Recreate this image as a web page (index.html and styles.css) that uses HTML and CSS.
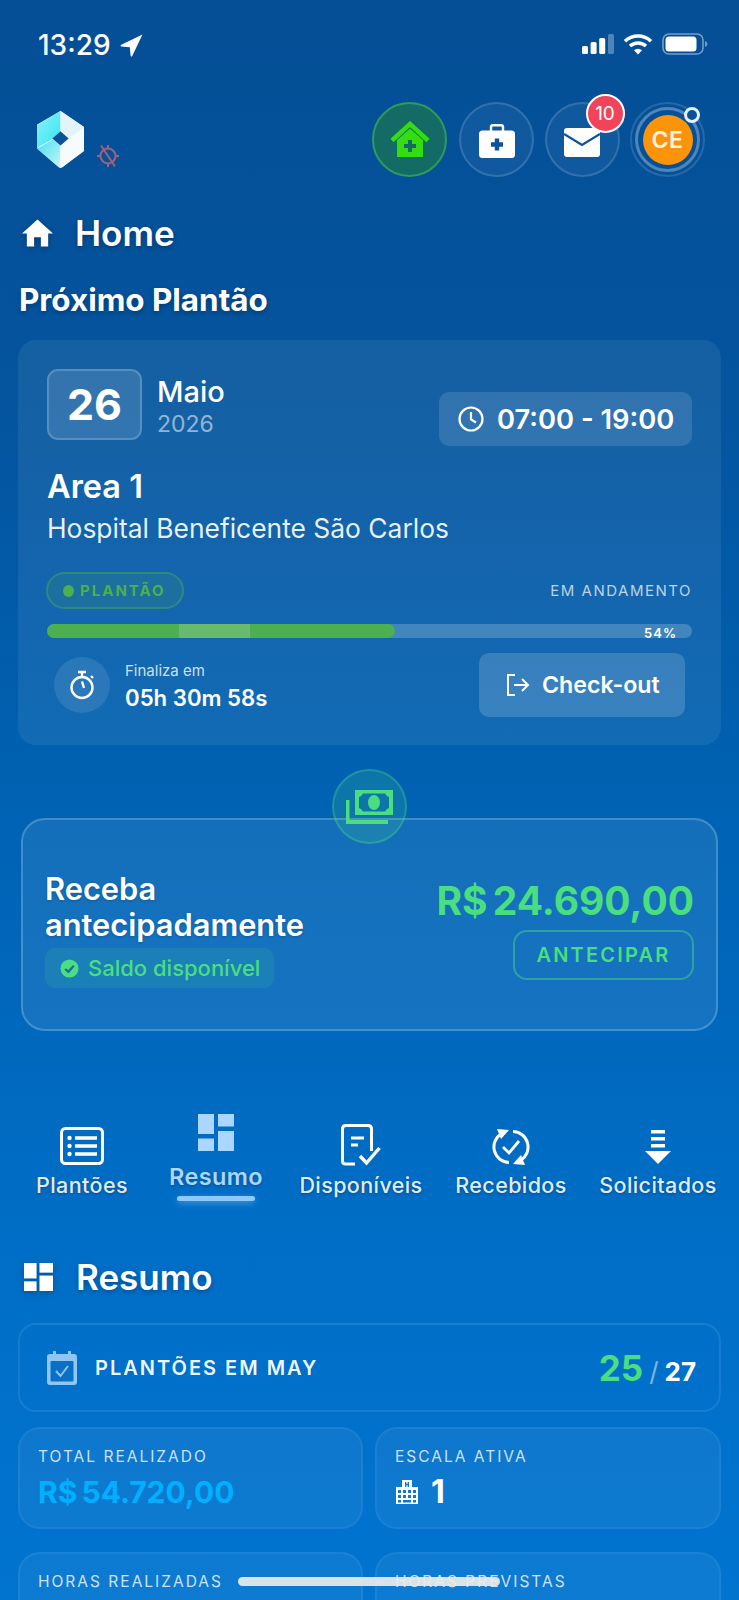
FILE: index.html
```html
<!DOCTYPE html>
<html lang="pt-BR">
<head>
  <meta charset="UTF-8">
  <meta name="viewport" content="width=device-width, initial-scale=1.0">
  <title>Home</title>
  <link rel="stylesheet" href="styles.css">
</head>
<body>
  <!-- Barra de status -->
  <div class="status-bar">
    <div class="status-time">
      <span>13:29</span>
      <svg class="status-arrow" viewBox="0 0 22 22"><path d="M21.5 .5 L.8 10.6 Q0 11.6 1.2 12 L9.4 12.7 L10.2 21 Q10.8 22 11.6 21.2 Z" fill="#fff"/></svg>
    </div>
    <div class="status-icons">
      <svg class="status-signal" viewBox="0 0 32 20">
        <rect x="0" y="12" width="6" height="8" rx="1.5" fill="#fff"/>
        <rect x="8.6" y="8" width="6" height="12" rx="1.5" fill="#fff"/>
        <rect x="17.2" y="4" width="6" height="16" rx="1.5" fill="#fff"/>
        <rect x="26" y="0" width="6" height="20" rx="1.5" fill="#fff" opacity=".3"/>
      </svg>
      <svg class="status-wifi" viewBox="0 0 30 22">
        <path d="M2 8.2 A19 19 0 0 1 28 8.2" fill="none" stroke="#fff" stroke-width="3.6"/>
        <path d="M7 13 A12 12 0 0 1 23 13" fill="none" stroke="#fff" stroke-width="3.6"/>
        <path d="M11 17.2 A6 6 0 0 1 19 17.2 L15 21.6 Z" fill="#fff"/>
      </svg>
      <svg class="status-battery" viewBox="0 0 46 22">
        <rect x="1" y="1" width="40" height="20" rx="6" fill="none" stroke="#fff" stroke-opacity=".45" stroke-width="1.6"/>
        <rect x="3.5" y="3.5" width="31" height="15" rx="3.5" fill="#fff"/>
        <path d="M43 8 Q45.5 9 45.5 11 Q45.5 13 43 14 Z" fill="#fff" fill-opacity=".45"/>
      </svg>
    </div>
  </div>

  <!-- Topo -->
  <div class="top-row">
    <div class="brand">
      <svg class="brand-logo" viewBox="0 0 46 56">
        <defs>
          <linearGradient id="logoCyan" x1="0" y1="0" x2="1" y2="1">
            <stop offset="0" stop-color="#8af2f6"/>
            <stop offset="1" stop-color="#35e4f4"/>
          </linearGradient>
          <linearGradient id="logoLow" x1="0" y1="0" x2="1" y2="1">
            <stop offset="0" stop-color="#45e2f0"/>
            <stop offset="1" stop-color="#c9f3f7"/>
          </linearGradient>
        </defs>
        <polygon points="23,1 1,14 1,36 23,55 45,39 45,16" fill="#eef8fb" stroke="#eef8fb" stroke-width="2" stroke-linejoin="round"/>
        <polygon points="23,0 0,14 0,36 16,27 23,20" fill="url(#logoCyan)"/>
        <polygon points="0,37 22,56 23,34 16,28" fill="url(#logoLow)"/>
        <polygon points="23,0 46,16 30,27 23,20" fill="#e4f3f8"/>
        <polygon points="46,17 46,39 24,56 23,34 30,28" fill="#f6fcfd"/>
        <polygon points="23,20 31,27 23,34 15,27" fill="#0b5199"/>
      </svg>
      <svg class="brand-sync" viewBox="0 0 24 24" fill="none" stroke="#a0607f" stroke-width="2">
        <circle cx="12" cy="12" r="7.5"/>
        <path d="M12 1 V4.5 M12 19.5 V23 M1 12 H4.5 M19.5 12 H23 M5 1.5 L19 22.5"/>
      </svg>
    </div>
    <div class="top-actions">
      <div class="round-btn round-btn-active">
        <svg class="icon-house" viewBox="0 0 40 37">
          <polygon points="20,7.500 33,19 33,36 7,36 7,19" fill="#33dd0f"/>
          <path d="M2 19.500 L20 3 L38 19.500" fill="none" stroke="#33dd0f" stroke-width="4.500"/>
          <path d="M18 19 H22 V23 H26 V27 H22 V31 H18 V27 H14 V23 H18 Z" fill="#146b66"/>
        </svg>
      </div>
      <div class="round-btn">
        <svg class="icon-case" viewBox="0 0 36 34">
          <path d="M12 8 V3 Q12 1.200 14 1.200 H22 Q24 1.200 24 3 V8" fill="none" stroke="#fff" stroke-width="2.400"/>
          <rect x="0" y="6.500" width="36" height="27.500" rx="3.500" fill="#fff"/>
          <path d="M15.800 14.500 H20.200 V18.300 H24 V22.700 H20.200 V26.500 H15.800 V22.700 H12 V18.300 H15.800 Z" fill="#0c5199"/>
        </svg>
      </div>
      <div class="round-btn">
        <svg class="icon-mail" viewBox="0 0 36 29">
          <rect x="0" y="0" width="36" height="29" rx="3" fill="#fff"/>
          <path d="M0 6 L18 17 L36 6" fill="none" stroke="#0c5199" stroke-width="2.200"/>
        </svg>
        <span class="badge">10</span>
      </div>
      <div class="round-btn round-btn-avatar">
        <div class="avatar-ring"></div>
        <div class="avatar">CE</div>
        <span class="avatar-dot"></span>
      </div>
    </div>
  </div>

  <h1 class="page-title page-title-home">
    <svg class="title-icon" viewBox="0 0 32 28"><path d="M16 0 L32 14.500 H27 V28 H19.500 V18.500 H12.500 V28 H5 V14.500 H0 Z" fill="#fff"/></svg>
    Home
  </h1>
  <h2 class="section-title">Próximo Plantão</h2>

  <!-- Próximo plantão -->
  <div class="shift-card">
    <div class="shift-head">
      <div class="shift-date">
        <div class="date-box">26</div>
        <div class="date-month">
          <div class="month-name">Maio</div>
          <div class="month-year">2026</div>
        </div>
      </div>
      <div class="time-pill">
        <svg class="time-icon" viewBox="0 0 26 26" fill="none" stroke="#fff" stroke-width="2.200"><circle cx="13" cy="13" r="11.500"/><path d="M13 6 V13.500 L18 16.500"/></svg>
        07:00 - 19:00
      </div>
    </div>
    <div class="shift-area">Area 1</div>
    <div class="shift-hospital">Hospital Beneficente São Carlos</div>
    <div class="shift-status">
      <div class="tag"><span class="tag-dot"></span>PLANTÃO</div>
      <div class="status-text">EM ANDAMENTO</div>
    </div>
    <div class="progress">
      <div class="progress-fill" style="width: 54%"><span class="progress-shine"></span></div>
      <span class="progress-label">54%</span>
    </div>
    <div class="shift-foot">
      <div class="timer">
        <div class="timer-icon">
          <svg viewBox="0 0 26 30" fill="none" stroke="#fff" stroke-width="2.400"><circle cx="12" cy="17.500" r="10.500"/><path d="M8 2 H16 M12 2 V7 M12 11.500 L14 18 M21 6 L23 8"/></svg>
        </div>
        <div>
          <div class="timer-label">Finaliza em</div>
          <div class="timer-value">05h 30m 58s</div>
        </div>
      </div>
      <div class="checkout-btn">
        <svg class="checkout-icon" viewBox="0 0 24 24" fill="none" stroke="#fff" stroke-width="2"><path d="M9 2 H2 V22 H9 M8 12 H22 M16 6 L22 12 L16 18"/></svg>
        Check-out
      </div>
    </div>
  </div>

  <!-- Antecipação -->
  <div class="advance-card">
    <div class="advance-badge">
      <svg viewBox="0 0 47 34">
        <path fill-rule="evenodd" d="M9 0 H47 V25 H9 Z M17 3.500 Q16 6 13 7 V18 Q16 19 17 21.500 H39 Q40 19 43 18 V7 Q40 6 39 3.500 Z" fill="#4ade80"/>
        <ellipse cx="28" cy="12.500" rx="6" ry="7.500" fill="#4ade80"/>
        <path d="M0 10 H3.500 V30 H42 V34 H0 Z" fill="#4ade80"/>
      </svg>
    </div>
    <div class="advance-left">
      <div class="advance-title">Receba<br>antecipadamente</div>
      <div class="balance-pill">
        <svg class="balance-icon" viewBox="0 0 20 20"><circle cx="10" cy="10" r="9.500" fill="#4ade80"/><path d="M5.500 10.500 L8.800 13.500 L14.500 7" fill="none" stroke="#1a6f97" stroke-width="2.400"/></svg>
        Saldo disponível
      </div>
    </div>
    <div class="advance-right">
      <div class="advance-value">R$ 24.690,00</div>
      <div class="advance-btn">ANTECIPAR</div>
    </div>
  </div>

  <!-- Abas -->
  <div class="tabs">
    <div class="tab">
      <svg class="tab-icon tab-icon-list" viewBox="0 0 44 38" fill="none" stroke="#fff">
        <rect x="1.500" y="1.500" width="41" height="35" rx="4" stroke-width="3"/>
        <path d="M15 11 H37 M15 19 H37 M15 27 H37" stroke-width="3.500"/>
        <circle cx="9.500" cy="11" r="2.200" fill="#fff" stroke="none"/><circle cx="9.500" cy="19" r="2.200" fill="#fff" stroke="none"/><circle cx="9.500" cy="27" r="2.200" fill="#fff" stroke="none"/>
      </svg>
      <div class="tab-label">Plantões</div>
    </div>
    <div class="tab tab-active">
      <svg class="tab-icon tab-icon-grid" viewBox="0 0 36 37" fill="#aad6ff">
        <rect x="0" y="0" width="16" height="20"/><rect x="0" y="24.500" width="16" height="12.500"/>
        <rect x="20" y="0" width="16" height="12.500"/><rect x="20" y="17" width="16" height="20"/>
      </svg>
      <div class="tab-label">Resumo</div>
      <div class="tab-line"></div>
    </div>
    <div class="tab">
      <svg class="tab-icon tab-icon-doc" viewBox="0 0 40 42" fill="none" stroke="#fff" stroke-width="3">
        <path d="M14 40 H5 Q1.500 40 1.500 37 V5 Q1.500 1.500 5 1.500 H27 Q30.500 1.500 30.500 5 V27"/>
        <path d="M10 14 H23 M10 21 H17" stroke-width="3.200"/>
        <path d="M19 32 L25.500 39 L38.500 24" stroke-width="3.400"/>
      </svg>
      <div class="tab-label">Disponíveis</div>
    </div>
    <div class="tab">
      <svg class="tab-icon tab-icon-sync" viewBox="0 0 38 38" fill="none" stroke="#fff" stroke-width="3">
        <path d="M17 34.500 A15.500 15.500 0 0 1 9 6"/>
        <path d="M21 3.500 A15.500 15.500 0 0 1 29 32"/>
        <path d="M5 1 L17 2 L9 11 Z M33 37 L21 36 L29 27 Z" fill="#fff" stroke="none"/>
        <path d="M11 19 L17 25 L27 13" stroke-width="2.800"/>
      </svg>
      <div class="tab-label">Recebidos</div>
    </div>
    <div class="tab">
      <svg class="tab-icon tab-icon-down" viewBox="0 0 26 34" fill="#fff">
        <rect x="6" y="0" width="14" height="3.500"/><rect x="6" y="7" width="14" height="3.500"/><rect x="6" y="14" width="14" height="3.500"/>
        <path d="M0 21 H26 L13 34 Z"/>
      </svg>
      <div class="tab-label">Solicitados</div>
    </div>
  </div>

  <h1 class="page-title page-title-resumo">
    <svg class="title-icon" viewBox="0 0 30 29" fill="#fff">
      <rect x="0" y="0" width="13" height="16"/><rect x="0" y="19" width="13" height="10"/>
      <rect x="16" y="0" width="14" height="10"/><rect x="16" y="13" width="14" height="16"/>
    </svg>
    Resumo
  </h1>

  <div class="month-box">
    <div class="month-box-left">
      <svg class="month-icon" viewBox="0 0 30 34">
        <path d="M6 0 H9 V3 H21 V0 H24 V3 H27 Q30 3 30 6 V31 Q30 34 27 34 H3 Q0 34 0 31 V6 Q0 3 3 3 H6 Z" fill="#8fc6f4"/>
        <rect x="3.500" y="10" width="23" height="20.500" rx="1" fill="#0a70c6"/>
        <path d="M9 20 L13.500 25 L21 15" fill="none" stroke="#8fc6f4" stroke-width="2"/>
      </svg>
      <span class="month-box-title">PLANTÕES EM MAY</span>
    </div>
    <div class="month-count"><span class="count-done">25</span><span class="count-slash">/</span><span class="count-total">27</span></div>
  </div>

  <div class="stats">
    <div class="stat">
      <div class="stat-label">TOTAL REALIZADO</div>
      <div class="stat-money">R$ 54.720,00</div>
    </div>
    <div class="stat">
      <div class="stat-label">ESCALA ATIVA</div>
      <div class="stat-number">
        <svg class="stat-icon" viewBox="0 0 22 24">
          <path fill-rule="evenodd" d="M6 0 H16 V7 H22 V24 H0 V7 H6 Z M9 2 V7 H10.300 V5.200 H11.700 V7 H13 V2 H11.700 V3.800 H10.300 V2 Z M2 10 V13 H5 V10 Z M7 10 V13 H10 V10 Z M12 10 V13 H15 V10 Z M17 10 V13 H20 V10 Z M2 15 V18 H5 V15 Z M7 15 V18 H10 V15 Z M12 15 V18 H15 V15 Z M17 15 V18 H20 V15 Z M2 20 V22.500 H5 V20 Z M7 20 V22.500 H15 V20 Z M17 20 V22.500 H20 V20 Z" fill="#fff"/>
        </svg>
        1
      </div>
    </div>
    <div class="stat">
      <div class="stat-label">HORAS REALIZADAS</div>
    </div>
    <div class="stat">
      <div class="stat-label">HORAS PREVISTAS</div>
    </div>
  </div>

  <div class="home-indicator"></div>
</body>
</html>
```

FILE: styles.css
```css
html, body {
  margin: 0;
  padding: 0;
  height: 1600px;
  overflow: hidden;
}

body {
  position: relative;
  background: linear-gradient(180deg, #044f96 0%, #04549e 25%, #0062b3 50%, #006dc5 75%, #0174d0 100%);
  color: white;
  font-family: Inter, "Noto Sans", sans-serif;
}

svg {
  display: block;
}

/* Barra de status */
.status-bar {
  height: 102px;
  box-sizing: border-box;
  padding: 31px 31px 0 38px;
  display: flex;
  justify-content: space-between;
  align-items: flex-start;
}

.status-time {
  display: flex;
  align-items: center;
  gap: 9px;
  font-size: 28px;
  font-weight: 500;
  line-height: 28px;
}

.status-arrow {
  width: 23px;
  height: 23px;
}

.status-icons {
  display: flex;
  align-items: center;
  gap: 9px;
  padding-top: 2px;
}

.status-signal {
  width: 32px;
  height: 20px;
}

.status-wifi {
  width: 30px;
  height: 22px;
}

.status-battery {
  width: 46px;
  height: 22px;
}

/* Topo */
.top-row {
  display: flex;
  justify-content: space-between;
  padding: 0 34px 0 37px;
  height: 75px;
}

.brand {
  display: flex;
  align-items: flex-end;
  gap: 12px;
  height: 66px;
}

.brand-logo {
  width: 47px;
  height: 57px;
}

.brand-sync {
  width: 24px;
  height: 24px;
}

.top-actions {
  display: flex;
  gap: 10.5px;
}

.round-btn {
  position: relative;
  width: 75px;
  height: 75px;
  box-sizing: border-box;
  border-radius: 50%;
  border: 2px solid rgba(255,255,255,0.14);
  background: rgba(255,255,255,0.05);
  display: flex;
  align-items: center;
  justify-content: center;
}

.round-btn-active {
  margin-right: 1.5px;
  border-color: #2d9b5c;
  background: #146b66;
}

.icon-house {
  width: 40px;
  height: 37px;
}

.icon-case {
  width: 36px;
  height: 34px;
  margin-top: 3px;
}

.icon-mail {
  width: 36px;
  height: 29px;
  margin-top: 5px;
}

.badge {
  position: absolute;
  top: -10px;
  right: -7px;
  width: 39px;
  height: 39px;
  box-sizing: border-box;
  border-radius: 50%;
  border: 2px solid #fff;
  background: #f1445a;
  font-size: 19px;
  line-height: 35px;
  text-align: center;
}

.round-btn-avatar {
  background: none;
}

.avatar-ring {
  position: absolute;
  top: 3px;
  left: 3px;
  right: 3px;
  bottom: 3px;
  border-radius: 50%;
  border: 3px solid rgba(255,255,255,0.3);
}

.avatar {
  width: 50px;
  height: 50px;
  border-radius: 50%;
  background: #fb9409;
  font-size: 23px;
  font-weight: 600;
  line-height: 50px;
  text-align: center;
  letter-spacing: .5px;
  color: #fff3e0;
}

.avatar-dot {
  position: absolute;
  top: 3px;
  right: 3px;
  width: 16px;
  height: 16px;
  box-sizing: border-box;
  border-radius: 50%;
  border: 3px solid #e6f0f8;
  background: #0b5199;
}

/* Títulos */
.page-title {
  display: flex;
  align-items: center;
  gap: 22px;
  margin: 0;
  font-size: 35px;
  font-weight: 600;
  line-height: 40px;
  text-shadow: 0 2px 5px rgba(0,0,0,0.3);
}

.page-title-home {
  margin-top: 36px;
  padding-left: 22px;
}

.page-title-resumo {
  margin-top: 56px;
  padding-left: 23px;
}

.title-icon {
  width: 31px;
  height: 28px;
  filter: drop-shadow(0 2px 3px rgba(0,0,0,0.25));
}

.section-title {
  margin: 30px 0 23px;
  padding-left: 19px;
  font-size: 31.4px;
  font-weight: 700;
  line-height: 34px;
  text-shadow: 0 2px 5px rgba(0,0,0,0.3);
}

/* Card do plantão */
.shift-card {
  margin: 0 18px;
  padding: 29px 29px 28px;
  border-radius: 18px;
  background: rgba(255,255,255,0.07);
}

.shift-head {
  display: flex;
  justify-content: space-between;
  align-items: flex-start;
}

.shift-date {
  display: flex;
  gap: 15px;
}

.date-box {
  width: 95px;
  height: 71px;
  box-sizing: border-box;
  border-radius: 11px;
  border: 2px solid rgba(255,255,255,0.18);
  background: rgba(255,255,255,0.13);
  font-size: 43px;
  font-weight: 700;
  line-height: 66px;
  text-align: center;
}

.month-name {
  margin-top: 5px;
  font-size: 29px;
  font-weight: 500;
  line-height: 36px;
}

.month-year {
  font-size: 23px;
  line-height: 28px;
  color: rgba(255,255,255,0.55);
}

.time-pill {
  display: flex;
  align-items: center;
  gap: 13px;
  width: 253px;
  height: 54px;
  box-sizing: border-box;
  margin-top: 23px;
  padding-left: 19px;
  border-radius: 10px;
  background: rgba(255,255,255,0.12);
  font-size: 27.3px;
  font-weight: 600;
  white-space: nowrap;
}

.time-icon {
  width: 26px;
  height: 26px;
}

.shift-area {
  margin-top: 22px;
  font-size: 32.5px;
  font-weight: 600;
  line-height: 38px;
}

.shift-hospital {
  margin-top: 6px;
  font-size: 26.4px;
  line-height: 32px;
  color: rgba(255,255,255,0.92);
}

.shift-status {
  display: flex;
  justify-content: space-between;
  align-items: center;
  margin-top: 28px;
}

.tag {
  display: flex;
  align-items: center;
  gap: 6px;
  width: 138px;
  height: 37px;
  box-sizing: border-box;
  margin-left: -1px;
  padding-left: 15px;
  border-radius: 19px;
  border: 2px solid rgba(76,175,80,0.4);
  background: rgba(76,175,80,0.15);
  color: #4caf50;
  font-size: 15px;
  font-weight: 700;
  letter-spacing: 2px;
}

.tag-dot {
  width: 11px;
  height: 12px;
  border-radius: 50%;
  background: #4caf50;
}

.status-text {
  font-size: 15px;
  letter-spacing: 1.5px;
  color: rgba(255,255,255,0.72);
}

.progress {
  position: relative;
  margin-top: 15px;
  height: 14px;
  border-radius: 7px;
  background: rgba(255,255,255,0.2);
}

.progress-fill {
  position: relative;
  height: 14px;
  border-radius: 7px;
  background: #4caf50;
  overflow: hidden;
}

.progress-shine {
  position: absolute;
  top: 0;
  bottom: 0;
  left: 132px;
  width: 71px;
  background: rgba(255,255,255,0.16);
}

.progress-label {
  position: absolute;
  top: 1px;
  right: 15px;
  font-size: 13px;
  font-weight: 600;
  line-height: 16px;
  letter-spacing: 1px;
}

.shift-foot {
  display: flex;
  justify-content: space-between;
  align-items: center;
  margin-top: 15px;
  padding: 0 7px;
}

.timer {
  display: flex;
  align-items: center;
  gap: 15px;
}

.timer-icon {
  width: 56px;
  height: 56px;
  border-radius: 50%;
  background: rgba(255,255,255,0.1);
  display: flex;
  align-items: center;
  justify-content: center;
}

.timer-icon svg {
  width: 26px;
  height: 30px;
  margin-left: 2px;
}

.timer-label {
  font-size: 15px;
  line-height: 22px;
  color: rgba(255,255,255,0.8);
}

.timer-value {
  margin-top: 3px;
  font-size: 22.2px;
  font-weight: 600;
  line-height: 26px;
}

.checkout-btn {
  display: flex;
  align-items: center;
  gap: 12px;
  width: 206px;
  height: 64px;
  box-sizing: border-box;
  padding-left: 27px;
  border-radius: 10px;
  background: rgba(255,255,255,0.16);
  font-size: 23.2px;
  font-weight: 600;
}

.checkout-icon {
  width: 24px;
  height: 24px;
}

/* Card de antecipação */
.advance-card {
  position: relative;
  display: flex;
  justify-content: space-between;
  align-items: center;
  box-sizing: border-box;
  height: 213px;
  margin: 73px 21px 0;
  padding: 10px 22px 0 22px;
  border-radius: 24px;
  border: 2px solid rgba(255,255,255,0.2);
  background: rgba(255,255,255,0.08);
}

.advance-badge {
  position: absolute;
  top: -51px;
  left: 309px;
  width: 75px;
  height: 75px;
  box-sizing: border-box;
  border-radius: 50%;
  border: 2px solid rgba(74,222,128,0.3);
  background: rgba(74,222,128,0.16);
  display: flex;
  align-items: center;
  justify-content: center;
}

.advance-badge svg {
  width: 47px;
  height: 34px;
}

.advance-title {
  font-size: 30.8px;
  font-weight: 600;
  line-height: 36px;
  text-shadow: 0 1px 3px rgba(0,0,0,0.2);
}

.balance-pill {
  display: flex;
  align-items: center;
  gap: 9px;
  width: 229px;
  height: 40px;
  box-sizing: border-box;
  margin-top: 5px;
  padding-left: 15px;
  border-radius: 10px;
  background: rgba(74,222,128,0.13);
  color: #4ade80;
  font-size: 22px;
  font-weight: 500;
  white-space: nowrap;
}

.balance-icon {
  width: 19px;
  height: 19px;
}

.advance-right {
  display: flex;
  flex-direction: column;
  align-items: flex-end;
}

.advance-value {
  color: #4ade80;
  font-size: 39px;
  font-weight: 700;
  line-height: 44px;
  word-spacing: -4px;
  white-space: nowrap;
}

.advance-btn {
  width: 181px;
  height: 50px;
  box-sizing: border-box;
  margin-top: 7px;
  border-radius: 14px;
  border: 2px solid rgba(74,222,128,0.45);
  color: #4ade80;
  font-size: 20px;
  font-weight: 600;
  line-height: 46px;
  letter-spacing: 2.2px;
  text-align: center;
}

/* Abas */
.tabs {
  display: grid;
  grid-template-columns: 128px 140px 150px 150px 144px;
  padding-left: 18px;
  margin-top: 83px;
  height: 87px;
}

.tab {
  display: flex;
  flex-direction: column;
  align-items: center;
  padding-top: 10px;
}

.tab-icon-list {
  width: 44px;
  height: 38px;
  margin-top: 3px;
}

.tab-icon-doc {
  width: 40px;
  height: 42px;
  margin-bottom: -1px;
}

.tab-icon-sync {
  width: 38px;
  height: 38px;
  margin-top: 4px;
  margin-bottom: -1px;
}

.tab-icon-down {
  width: 26px;
  height: 34px;
  margin-top: 6px;
  margin-bottom: 1px;
}

.tab-label {
  margin-top: 7px;
  font-size: 21.5px;
  font-weight: 500;
  line-height: 26px;
  letter-spacing: .4px;
  white-space: nowrap;
  color: rgba(255,255,255,0.9);
  text-shadow: 0 1px 3px rgba(0,0,0,0.3);
}

.tab-active {
  padding-top: 0;
}

.tab-icon-grid {
  width: 36px;
  height: 37px;
}

.tab-active .tab-label {
  margin-top: 13px;
  font-size: 23.5px;
  font-weight: 600;
  color: #aad6ff;
}

.tab-line {
  width: 78px;
  height: 5px;
  margin-top: 6px;
  border-radius: 3px;
  background: #8fcaff;
  box-shadow: 0 2px 6px rgba(143,202,255,0.5);
}

/* Resumo */
.month-box {
  display: flex;
  justify-content: space-between;
  align-items: center;
  box-sizing: border-box;
  height: 89px;
  margin: 26px 18px 0;
  padding: 0 23px 0 27px;
  border-radius: 18px;
  border: 2px solid rgba(255,255,255,0.09);
}

.month-box-left {
  display: flex;
  align-items: center;
  gap: 18px;
}

.month-icon {
  width: 30px;
  height: 34px;
}

.month-box-title {
  font-size: 20px;
  font-weight: 600;
  letter-spacing: 2px;
  color: rgba(255,255,255,0.95);
}

.month-count {
  display: flex;
  align-items: baseline;
}

.count-done {
  color: #4ade80;
  font-size: 35px;
  font-weight: 700;
}

.count-slash {
  margin: 0 6px;
  font-size: 26px;
  color: rgba(255,255,255,0.5);
}

.count-total {
  font-size: 26px;
  font-weight: 700;
}

.stats {
  display: grid;
  grid-template-columns: 345px 346px;
  gap: 23px 12px;
  margin: 15px 18px 0;
}

.stat {
  height: 102px;
  box-sizing: border-box;
  padding: 17px 18px 0;
  border-radius: 22px;
  border: 2px solid rgba(255,255,255,0.06);
  background: rgba(255,255,255,0.05);
}

.stat-label {
  font-size: 15.5px;
  line-height: 22px;
  letter-spacing: 2px;
  color: rgba(255,255,255,0.8);
}

.stat-money {
  margin-top: 3px;
  color: #00b0ff;
  font-size: 30px;
  font-weight: 700;
  line-height: 42px;
  word-spacing: -3px;
}

.stat-number {
  display: flex;
  align-items: center;
  gap: 13px;
  margin-top: 3px;
  padding-left: 1px;
  font-size: 32px;
  font-weight: 700;
  line-height: 42px;
}

.stat-icon {
  width: 22px;
  height: 24px;
}

.home-indicator {
  position: absolute;
  left: 238px;
  bottom: 14px;
  width: 262px;
  height: 9px;
  border-radius: 5px;
  background: rgba(235,235,235,0.92);
}
```
